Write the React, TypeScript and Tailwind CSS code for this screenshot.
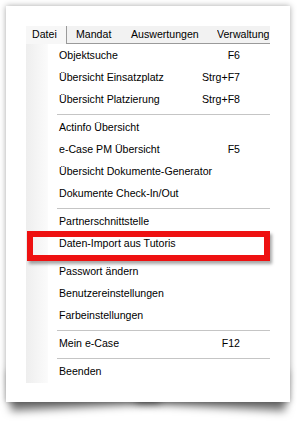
import React from "react"

type Entry = { label?: string; shortcut?: string; sep?: boolean; gap?: boolean }

const entries: Entry[] = [
  { label: "Objektsuche", shortcut: "F6" },
  { label: "Übersicht Einsatzplatz", shortcut: "Strg+F7" },
  { label: "Übersicht Platzierung", shortcut: "Strg+F8" },
  { sep: true },
  { label: "Actinfo Übersicht" },
  { label: "e-Case PM Übersicht", shortcut: "F5" },
  { label: "Übersicht Dokumente-Generator" },
  { label: "Dokumente Check-In/Out" },
  { sep: true },
  { label: "Partnerschnittstelle" },
  { label: "Daten-Import aus Tutoris" },
  { gap: true },
  { label: "Passwort ändern" },
  { label: "Benutzereinstellungen" },
  { label: "Farbeinstellungen" },
  { sep: true },
  { label: "Mein e-Case", shortcut: "F12" },
  { sep: true },
  { label: "Beenden" },
]

function MenuRow({ entry }: { entry: Entry }) {
  if (entry.sep) {
    return (
      <div className="h-[6px] pt-[3px] pl-[31px]">
        <div className="h-px bg-[#c5c5c5]" />
      </div>
    )
  }
  if (entry.gap) {
    return <div className="h-[6px]" />
  }
  return (
    <div className="flex h-[22px] items-center pl-[33px] pr-[30px]">
      <span className="flex-1">{entry.label}</span>
      {entry.shortcut && <span className="text-right">{entry.shortcut}</span>}
    </div>
  )
}

export default function App() {
  return (
    <div className="w-[304px] h-[431px] bg-white overflow-hidden pt-[6px] pl-[6px]">
      <div className="relative w-[284px] h-[396px]">
        {/* curled page shadow */}
        <div className="absolute left-[3px] bottom-[10px] w-[150px] h-[40px] bg-[#777] shadow-[0_15px_8px_rgba(0,0,0,0.55)] -rotate-[3deg]" />
        <div className="absolute right-[3px] bottom-[10px] w-[150px] h-[40px] bg-[#777] shadow-[0_15px_8px_rgba(0,0,0,0.55)] rotate-[3deg]" />

        <div className="relative z-10 h-full bg-white shadow-[0_0_6px_rgba(0,0,0,0.35)] pt-[20px] pl-[20px]">
          <div
            className="w-[244px] text-[10.6px] text-black"
            style={{ fontFamily: '"Liberation Sans", Arial, sans-serif' }}
          >
            {/* menu bar */}
            <div className="flex h-[18px] items-center bg-[#f2f2f2]">
              <div className="flex h-full w-[41px] items-center border-r border-[#9a9a9a] bg-[#f7f7f7] pl-[6px]">
                Datei
              </div>
              <div className="flex h-full flex-1 items-center border-b border-[#9a9a9a]">
                <span className="w-[64px] pl-[9px]">Mandat</span>
                <span className="w-[86px]">Auswertungen</span>
                <span className="whitespace-nowrap overflow-hidden">Verwaltung</span>
              </div>
            </div>

            {/* dropdown */}
            <div className="relative bg-white pt-[1px]">
              <div className="absolute left-0 top-0 bottom-0 w-[22px] bg-gradient-to-r from-[#eeeeee] to-[#fbfbfb]" />
              <div className="relative">
                {entries.map((e, i) => (
                  <MenuRow key={i} entry={e} />
                ))}
              </div>
            </div>
          </div>

          {/* highlight annotation */}
          <div className="absolute left-[21px] top-[225px] w-[243px] h-[30px] border-[6px] border-[#ee1111] shadow-[2px_3px_3px_rgba(0,0,0,0.35)]" />
        </div>
      </div>
    </div>
  )
}
